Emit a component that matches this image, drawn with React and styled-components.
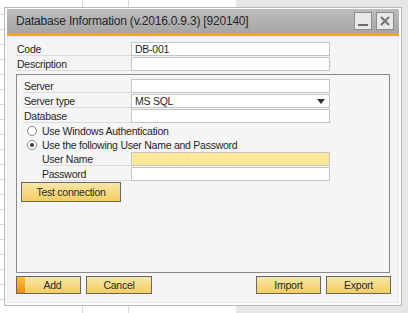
import React from 'react';
import styled, { createGlobalStyle } from 'styled-components';

const GlobalStyle = createGlobalStyle`
  body, html {
    margin: 0;
    padding: 0;
    width: 100%;
    height: 100%;
    font-family: "Liberation Sans", Arial, sans-serif;
  }
`;

const Desktop = styled.div`
  width: 408px;
  height: 313px;
  box-sizing: border-box;
  padding: 7px 0 0 4px;
  overflow: hidden;
  background:
    linear-gradient(to right, transparent 236px, #e6e6e6 236px),
    linear-gradient(to right, transparent 82px, #d9d9d9 82px, #d9d9d9 83px, transparent 83px,
      transparent 128px, #d9d9d9 128px, #d9d9d9 129px, transparent 129px),
    repeating-linear-gradient(to bottom, transparent 0, transparent 14px, #dadada 14px, #dadada 15px),
    #ffffff;
`;

const Window = styled.div`
  width: 398px;
  height: 299px;
  box-sizing: border-box;
  border: 1px solid #b8b8b8;
  background: #fcfcfc;
  padding: 1px 2px 2px 2px;
  display: flex;
  flex-direction: column;
`;

const TitleBar = styled.div`
  height: 24px;
  flex: none;
  display: flex;
  align-items: center;
  padding: 0 5px 0 9px;
  background: linear-gradient(to bottom, #bdbdbd, #a6a6a6);
  border-bottom: 3px solid #f0ab00;
`;

const Title = styled.div`
  flex: 1;
  font-size: 12px;
  letter-spacing: -0.2px;
  color: #262626;
  white-space: nowrap;
`;

const WinButton = styled.div`
  width: 18px;
  height: 18px;
  box-sizing: border-box;
  border: 1px solid #8c8c8c;
  background: #e9e9e9;
  margin-left: 4px;
  display: flex;
  align-items: center;
  justify-content: center;
`;

const Body = styled.div`
  flex: 1;
  background: #f4f4f4;
  border: 1px solid #ececec;
  padding: 5px 7px 0 8px;
  display: flex;
  flex-direction: column;
  font-size: 10.5px;
  letter-spacing: -0.25px;
  color: #1f1f1f;
`;

const Row = styled.div`
  display: flex;
  height: 14px;
  margin-bottom: 1px;
  padding-left: ${p => p.indent || 0}px;
`;

const Label = styled.div`
  width: ${p => p.width}px;
  flex: none;
  box-sizing: border-box;
  border-bottom: 1px solid #dcdcdc;
  line-height: 14px;
  padding-left: 1px;
  white-space: nowrap;
`;

const Field = styled.div`
  width: 199px;
  height: 14px;
  box-sizing: border-box;
  border: 1px solid #c4c4c4;
  background: ${p => (p.highlight ? '#fbe89a' : '#ffffff')};
  line-height: 12px;
  padding-left: 3px;
  display: flex;
  align-items: center;
  justify-content: space-between;
`;

const Caret = styled.span`
  width: 0;
  height: 0;
  border-left: 4px solid transparent;
  border-right: 4px solid transparent;
  border-top: 5px solid #333;
  margin-right: 4px;
`;

const Group = styled.div`
  margin-top: 2px;
  width: 374px;
  height: 199px;
  box-sizing: border-box;
  border: 1px solid #8a8a8a;
  background: #f5f5f5;
  padding: 4px 6px;
  display: flex;
  flex-direction: column;
`;

const RadioRow = styled.div`
  display: flex;
  align-items: center;
  height: 14px;
  padding-left: 4px;
`;

const Radio = styled.span`
  width: 10px;
  height: 10px;
  box-sizing: border-box;
  border-radius: 50%;
  border: 1px solid #8a8a8a;
  background: #ffffff;
  margin-right: 5px;
  display: flex;
  align-items: center;
  justify-content: center;
  &::after {
    content: '';
    width: 4px;
    height: 4px;
    border-radius: 50%;
    background: ${p => (p.checked ? '#3a3a3a' : 'transparent')};
  }
`;

const Button = styled.div`
  width: ${p => p.width}px;
  height: ${p => p.height}px;
  margin-left: ${p => p.shift || 0}px;
  flex: none;
  box-sizing: border-box;
  border: 1px solid #676767;
  background: linear-gradient(to bottom, #f8e6a8, #f3cd60);
  color: #2a2a2a;
  display: flex;
  align-items: center;
  justify-content: center;
`;

const PrimaryStrip = styled.div`
  width: 8px;
  align-self: stretch;
  background: linear-gradient(to bottom, #f6c13a, #ef8b14);
`;

const ButtonText = styled.div`
  flex: 1;
  display: flex;
  align-items: center;
  justify-content: center;
`;

const Footer = styled.div`
  margin-top: 3px;
  display: flex;
  gap: 5px;
`;

const Spacer = styled.div`
  flex: 1;
`;

export default function App() {
  return (
    <Desktop>
      <GlobalStyle />
      <Window>
        <TitleBar>
          <Title>Database Information (v.2016.0.9.3) [920140]</Title>
          <WinButton>
            <svg width="12" height="12" viewBox="0 0 12 12">
              <rect x="1" y="9" width="10" height="2" fill="#6b6b6b" />
            </svg>
          </WinButton>
          <WinButton>
            <svg width="12" height="12" viewBox="0 0 12 12">
              <path d="M2 2 L10 10 M10 2 L2 10" stroke="#777" strokeWidth="2.2" />
            </svg>
          </WinButton>
        </TitleBar>
        <Body>
          <Row>
            <Label width={115}>Code</Label>
            <Field>DB-001</Field>
          </Row>
          <Row>
            <Label width={115}>Description</Label>
            <Field />
          </Row>
          <Group>
            <Row>
              <Label width={108}>Server</Label>
              <Field />
            </Row>
            <Row>
              <Label width={108}>Server type</Label>
              <Field>
                MS SQL
                <Caret />
              </Field>
            </Row>
            <Row>
              <Label width={108}>Database</Label>
              <Field />
            </Row>
            <RadioRow>
              <Radio />
              Use Windows Authentication
            </RadioRow>
            <RadioRow>
              <Radio checked />
              Use the following User Name and Password
            </RadioRow>
            <Row indent={18}>
              <Label width={90}>User Name</Label>
              <Field highlight />
            </Row>
            <Row indent={18}>
              <Label width={90}>Password</Label>
              <Field />
            </Row>
            <Button width={100} height={20} shift={-2}>Test connection</Button>
          </Group>
          <Footer>
            <Button width={65} height={18}>
              <PrimaryStrip />
              <ButtonText>Add</ButtonText>
            </Button>
            <Button width={66} height={18}>Cancel</Button>
            <Spacer />
            <Button width={65} height={18}>Import</Button>
            <Button width={65} height={18}>Export</Button>
          </Footer>
        </Body>
      </Window>
    </Desktop>
  );
}
